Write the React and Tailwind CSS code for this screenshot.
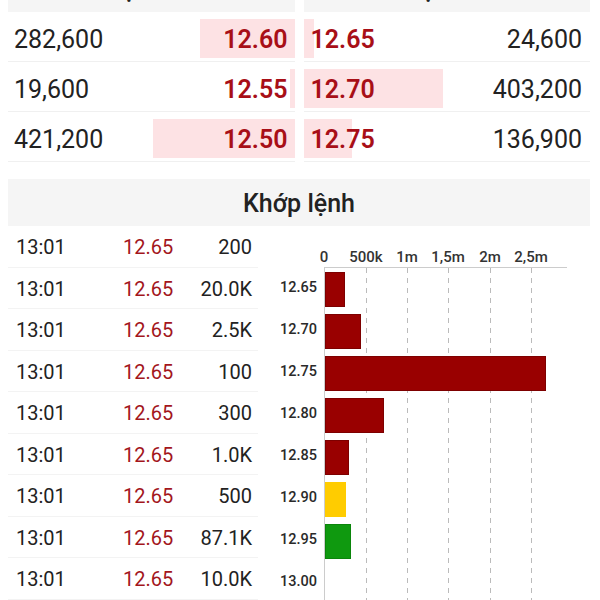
import React from "react";

const bids = [
  { vol: "282,600", price: "12.60", w: 95 },
  { vol: "19,600", price: "12.55", w: 5 },
  { vol: "421,200", price: "12.50", w: 142 },
];
const asks = [
  { vol: "24,600", price: "12.65", w: 10 },
  { vol: "403,200", price: "12.70", w: 139 },
  { vol: "136,900", price: "12.75", w: 48 },
];
const trades = ["200", "20.0K", "2.5K", "100", "300", "1.0K", "500", "87.1K", "10.0K"];
const bars = [
  { p: "12.65", w: 20, c: "red" },
  { p: "12.70", w: 36, c: "red" },
  { p: "12.75", w: 221, c: "red" },
  { p: "12.80", w: 59, c: "red" },
  { p: "12.85", w: 24, c: "red" },
  { p: "12.90", w: 21, c: "yellow" },
  { p: "12.95", w: 26, c: "green" },
  { p: "13.00", w: 0, c: "none" },
];
const ticks = [
  { t: "0", x: 66 },
  { t: "500k", x: 108 },
  { t: "1m", x: 149 },
  { t: "1,5m", x: 190 },
  { t: "2m", x: 232 },
  { t: "2,5m", x: 273 },
];
const grid = [41, 82, 123, 165, 206];

function Bar({ b }) {
  if (b.c === "none") return null;
  const cls =
    b.c === "red"
      ? "h-[35px] bg-[#990000] border border-[#7d0000]"
      : b.c === "yellow"
      ? "h-[35px] bg-[#ffcc00]"
      : "h-[35px] bg-[#0f990f] border border-[#0b850b]";
  return <div className={cls} style={{ width: b.w }} />;
}

export default function App() {
  return (
    <div
      className="w-[600px] h-[600px] overflow-hidden bg-white pl-2 pr-[10px] text-[#222222]"
      style={{ fontFamily: "Roboto, 'Noto Sans', sans-serif" }}
    >
      {/* header strip (scrolled, mostly out of view) */}
      <div className="-mt-[33px] grid grid-cols-2 gap-[9px]">
        <div className="h-[45px] bg-[#f5f5f5] flex items-center justify-center pl-[22px] text-[24px] font-medium leading-[36px]">
          Lệnh mua
        </div>
        <div className="h-[45px] bg-[#f5f5f5] flex items-center justify-center pl-[22px] text-[24px] font-medium leading-[36px]">
          Lệnh bán
        </div>
      </div>

      {/* order book */}
      <div className="grid grid-cols-2 gap-[9px]">
        <div className="flex flex-col">
          {bids.map((r) => (
            <div
              key={r.price}
              className="relative h-[50px] border-b border-[#f0f0f0] flex items-center justify-between pl-[6px] pr-[7px] pt-[9px] pb-[3px] text-[25px] leading-none"
            >
              <div
                className="absolute right-0 top-[7px] bottom-[3px] bg-[#fde2e4]"
                style={{ width: r.w }}
              />
              <span className="relative">{r.vol}</span>
              <span className="relative font-semibold text-[#a80f17]">{r.price}</span>
            </div>
          ))}
        </div>
        <div className="flex flex-col">
          {asks.map((r) => (
            <div
              key={r.price}
              className="relative h-[50px] border-b border-[#f0f0f0] flex items-center justify-between pl-[7px] pr-[8px] pt-[9px] pb-[3px] text-[25px] leading-none"
            >
              <div
                className="absolute left-0 top-[7px] bottom-[3px] bg-[#fde2e4]"
                style={{ width: r.w }}
              />
              <span className="relative font-semibold text-[#a80f17]">{r.price}</span>
              <span className="relative">{r.vol}</span>
            </div>
          ))}
        </div>
      </div>

      {/* Khớp lệnh */}
      <div className="mt-[17px] h-[47px] bg-[#f5f5f5] flex items-center justify-center pt-[3px] text-[25px] font-medium">
        Khớp lệnh
      </div>

      <div className="flex">
        {/* trades */}
        <div className="w-[250px] flex flex-col">
          {trades.map((v, i) => (
            <div
              key={i}
              className="h-[41.5px] flex items-center border-b border-[#f3f3f3] pl-2 pr-[6px] text-[20px] pt-[2px]"
            >
              <span className="w-[107px]">13:01</span>
              <span className="w-[50px] text-[#a3161c]">12.65</span>
              <span className="flex-1 text-right">{v}</span>
            </div>
          ))}
        </div>

        {/* chart */}
        <div className="flex-1 flex flex-col">
          <div className="relative h-[41px]">
            {ticks.map((t) => (
              <span
                key={t.t}
                className="absolute top-[20px] leading-[22px] text-[15px] font-medium text-[#333333] -translate-x-1/2"
                style={{ left: t.x }}
              >
                {t.t}
              </span>
            ))}
          </div>
          <div className="flex">
            <div className="w-[66px] flex flex-col">
              {bars.map((b) => (
                <div
                  key={b.p}
                  className="h-[42px] flex items-center justify-end pr-[7px] text-[14.5px] font-medium text-[#2a2a2a]"
                >
                  {b.p}
                </div>
              ))}
            </div>
            <div className="relative w-[243px] border-l border-t border-[#cccccc]">
              <svg className="absolute inset-0 w-full h-full" width="242" height="340">
                {grid.map((x) => (
                  <line
                    key={x}
                    x1={x + 0.5}
                    x2={x + 0.5}
                    y1="0"
                    y2="340"
                    stroke="#bbbbbb"
                    strokeWidth="1"
                    strokeDasharray="5 5"
                  />
                ))}
              </svg>
              <div className="relative flex flex-col">
                {bars.map((b) => (
                  <div key={b.p} className="h-[42px] flex items-center">
                    <Bar b={b} />
                  </div>
                ))}
              </div>
            </div>
          </div>
        </div>
      </div>
    </div>
  );
}
